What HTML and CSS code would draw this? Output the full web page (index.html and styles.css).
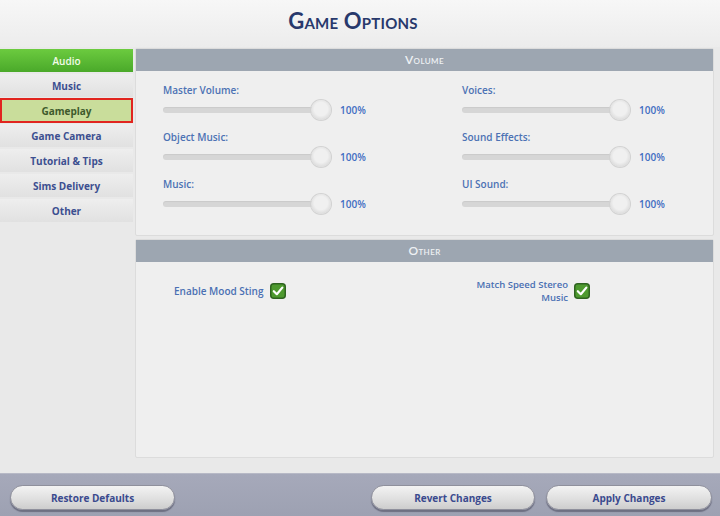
FILE: index.html
```html
<!DOCTYPE html>
<html>
<head>
<meta charset="utf-8">
<link rel="stylesheet" href="styles.css">
</head>
<body>
<div class="app">
  <header class="title">Game Options</header>
  <div class="main">
    <nav class="side">
      <div class="tab active">Audio</div>
      <div class="tab">Music</div>
      <div class="tab selected">Gameplay</div>
      <div class="tab">Game Camera</div>
      <div class="tab">Tutorial &amp; Tips</div>
      <div class="tab">Sims Delivery</div>
      <div class="tab">Other</div>
    </nav>
    <div class="content">
      <section class="panel vol">
        <div class="phead">Volume</div>
        <div class="sliders">
          <div class="col">
            <div class="srow"><div class="lbl">Master Volume:</div><div class="slider"><div class="track"><span class="knob"></span></div><span class="pct">100%</span></div></div>
            <div class="srow"><div class="lbl">Object Music:</div><div class="slider"><div class="track"><span class="knob"></span></div><span class="pct">100%</span></div></div>
            <div class="srow"><div class="lbl">Music:</div><div class="slider"><div class="track"><span class="knob"></span></div><span class="pct">100%</span></div></div>
          </div>
          <div class="col">
            <div class="srow"><div class="lbl">Voices:</div><div class="slider"><div class="track"><span class="knob"></span></div><span class="pct">100%</span></div></div>
            <div class="srow"><div class="lbl">Sound Effects:</div><div class="slider"><div class="track"><span class="knob"></span></div><span class="pct">100%</span></div></div>
            <div class="srow"><div class="lbl">UI Sound:</div><div class="slider"><div class="track"><span class="knob"></span></div><span class="pct">100%</span></div></div>
          </div>
        </div>
      </section>
      <section class="panel other">
        <div class="phead">Other</div>
        <div class="checks">
          <div class="cell left">
            <span class="clbl">Enable Mood Sting</span>
            <svg class="cb" viewBox="0 0 16 16" width="16" height="16"><rect x="0.75" y="0.75" width="14.5" height="14.5" rx="3" fill="#4e9a2f" stroke="#2f6420" stroke-width="1.5"/><path d="M3.8 8.2 L6.8 11.2 L12.3 4.6" fill="none" stroke="#fff" stroke-width="2.2" stroke-linecap="round" stroke-linejoin="round"/></svg>
          </div>
          <div class="cell right">
            <span class="clbl two"><span class="ln">Match Speed Stereo</span><span class="ln">Music</span></span>
            <svg class="cb" viewBox="0 0 16 16" width="16" height="16"><rect x="0.75" y="0.75" width="14.5" height="14.5" rx="3" fill="#4e9a2f" stroke="#2f6420" stroke-width="1.5"/><path d="M3.8 8.2 L6.8 11.2 L12.3 4.6" fill="none" stroke="#fff" stroke-width="2.2" stroke-linecap="round" stroke-linejoin="round"/></svg>
          </div>
        </div>
      </section>
    </div>
  </div>
  <footer class="foot">
    <button class="btn restore">Restore Defaults</button>
    <div class="spacer"></div>
    <button class="btn revert">Revert Changes</button>
    <button class="btn apply">Apply Changes</button>
  </footer>
</div>
</body>
</html>
```
FILE: styles.css
```css
* { box-sizing: border-box; }
html, body { margin: 0; padding: 0; }
body {
  width: 720px;
  height: 516px;
  overflow: hidden;
  background: #e8e8e8;
  font-family: "Open Sans", "Liberation Sans", sans-serif;
}
.app {
  width: 720px;
  height: 516px;
  display: flex;
  flex-direction: column;
  background: #e9e9e9;
}
.title {
  height: 47px;
  display: flex;
  align-items: center;
  justify-content: center;
  padding-right: 14px;
  padding-bottom: 7px;
  font-family: "Lato", "Open Sans", sans-serif;
  font-variant: small-caps;
  font-weight: 700;
  font-size: 22px;
  letter-spacing: 0.2px;
  color: #28396c;
  background: linear-gradient(#f7f7f7, #ececec);
}
.main {
  flex: 1;
  display: flex;
  gap: 2px;
  min-height: 0;
}
.side {
  width: 133px;
  display: flex;
  flex-direction: column;
  gap: 2px;
  padding-top: 2px;
}
.tab {
  height: 23px;
  display: flex;
  align-items: center;
  justify-content: center;
  font-size: 10px;
  font-weight: 700;
  color: #3c4f90;
  background: linear-gradient(#eeeeee, #e1e1e1);
}
.tab.active {
  color: #f2fbe8;
  font-weight: 600;
  background: linear-gradient(#6ccb3f, #4aa92a);
}
.tab.selected {
  height: 25px;
  margin: -1px 0;
  border: 2px solid #e1251f;
  background: #c9dd9b;
  color: #3e5a2c;
}
.content {
  flex: 1;
  display: flex;
  flex-direction: column;
  gap: 3px;
  padding-right: 6px;
  padding-top: 1px;
}
.panel {
  background: #efefef;
  border: 1px solid #dcdcdc;
  border-radius: 2px;
}
.vol { height: 188px; }
.other { height: 219px; }
.phead {
  height: 22px;
  background: #9da6b1;
  color: #eef1f4;
  font-family: "Lato", "Open Sans", sans-serif;
  font-variant: small-caps;
  font-size: 12px;
  font-weight: 600;
  letter-spacing: 0.4px;
  display: flex;
  align-items: center;
  justify-content: center;
  padding-bottom: 1px;
}
.sliders {
  display: grid;
  grid-template-columns: 299px 1fr;
  padding: 12px 0 0 27px;
}
.col {
  display: flex;
  flex-direction: column;
  gap: 10px;
}
.srow {
  display: flex;
  flex-direction: column;
  gap: 3px;
}
.lbl {
  height: 14px;
  line-height: 14px;
  font-size: 10px;
  font-weight: 600;
  color: #4c72b4;
}
.slider {
  height: 20px;
  display: flex;
  align-items: center;
  gap: 9px;
}
.track {
  position: relative;
  width: 168px;
  height: 20px;
  display: flex;
  align-items: center;
}
.track::before {
  content: "";
  display: block;
  width: 160px;
  height: 6px;
  border-radius: 3px;
  background: #d6d6d6;
  box-shadow: inset 0 1px 1px rgba(0,0,0,0.06);
}
.knob {
  position: absolute;
  right: 0;
  top: 0;
  width: 20px;
  height: 20px;
  border-radius: 50%;
  background: radial-gradient(circle at 50% 45%, #f0f0f0 0 45%, #dedede 70%, #cfcfcf 100%);
  box-shadow: 0 0 0 1px #d2d2d2;
}
.pct {
  font-size: 10px;
  font-weight: 600;
  color: #3f6dc2;
}
.checks {
  display: grid;
  grid-template-columns: 289px 1fr;
  padding-top: 16px;
}
.cell {
  display: flex;
  align-items: center;
  gap: 6px;
}
.cell.left { padding-left: 38px; }
.cell.right { justify-content: flex-end; padding-right: 123px; }
.clbl {
  font-size: 10px;
  font-weight: 600;
  color: #4a6fb3;
}
.clbl.two {
  display: flex;
  flex-direction: column;
  align-items: flex-end;
  font-size: 9.5px;
  line-height: 13px;
}
.cb { display: block; flex: none; }
.foot {
  height: 43px;
  display: flex;
  align-items: flex-start;
  gap: 11px;
  padding: 11px 8px 0 10px;
  background: linear-gradient(#a6a9ba, #9da1b2);
  border-top: 1px solid #b7b9c6;
}
.spacer { flex: 1; }
.btn {
  height: 25px;
  border-radius: 13px;
  border: 1px solid #8f909c;
  background: linear-gradient(#f3f3f3, #dedede 60%, #cdcdcd);
  box-shadow: 0 2px 1px rgba(50,50,70,0.45);
  font-family: "Open Sans", "Liberation Sans", sans-serif;
  font-size: 10px;
  font-weight: 700;
  color: #3a4a8e;
  padding: 0;
}
.restore { width: 165px; }
.revert { width: 164px; }
.apply { width: 166px; }
```
